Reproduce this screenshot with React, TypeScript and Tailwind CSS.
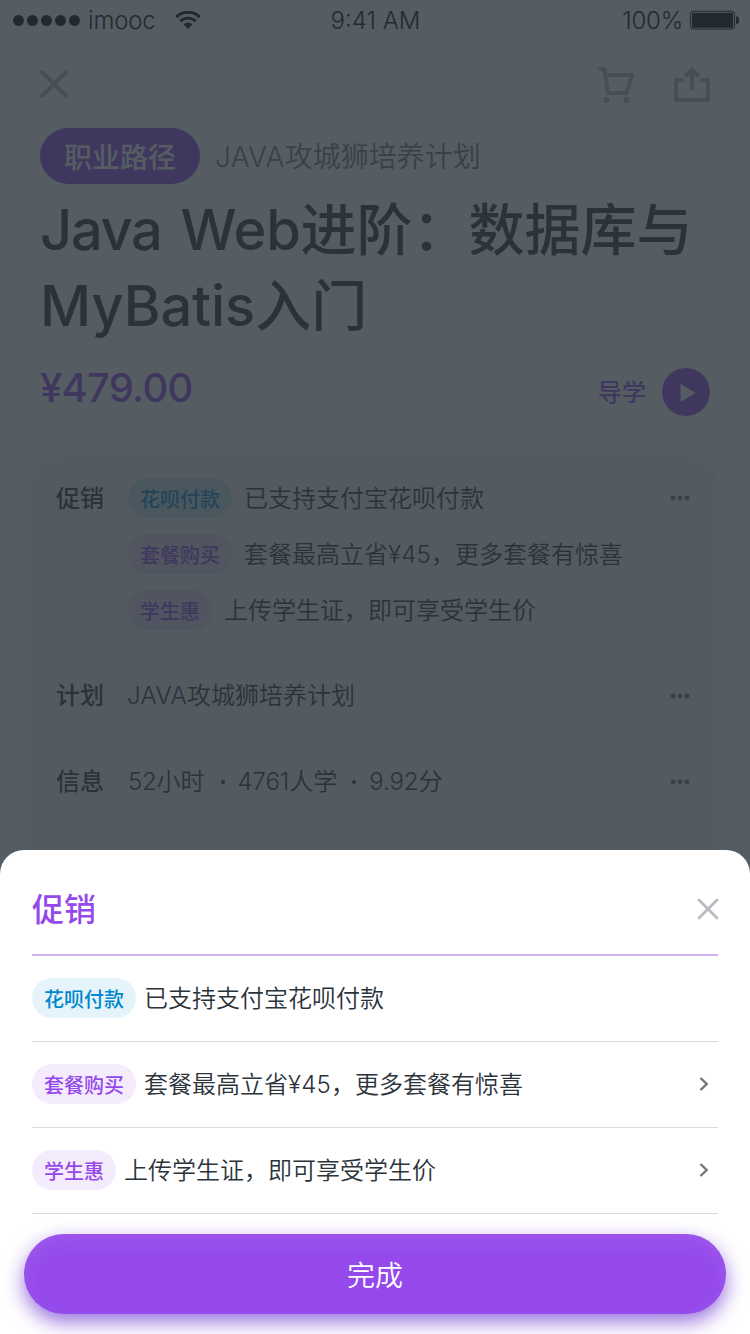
import type { ReactNode } from "react";

type Tone = "blue" | "purple";

interface Promo {
  tag: string;
  tone: Tone;
  before: string;
  price?: string;
  after?: string;
  link: boolean;
}

const promos: Promo[] = [
  { tag: "花呗付款", tone: "blue", before: "已支持支付宝花呗付款", link: false },
  { tag: "套餐购买", tone: "purple", before: "套餐最高立省", price: "¥45", after: "，更多套餐有惊喜", link: true },
  { tag: "学生惠", tone: "purple", before: "上传学生证，即可享受学生价", link: true },
];

const tones: Record<Tone, string> = {
  blue: "bg-[#0088cc]/10 text-[#0088cc]",
  purple: "bg-[#9549eb]/10 text-[#9549eb]",
};

const cardTones: Record<Tone, string> = {
  blue: "bg-[#0088cc]/16 text-[#0088cc]",
  purple: "bg-[#9549eb]/16 text-[#9549eb]",
};

function Tag({ className, children }: { className: string; children: ReactNode }) {
  return (
    <span className={`flex h-10 shrink-0 items-center rounded-full px-3 pt-[3px] text-[20px] leading-none font-medium ${className}`}>
      {children}
    </span>
  );
}

function PromoText({ promo }: { promo: Promo }) {
  return (
    <span className="pt-0.5 whitespace-nowrap">
      {promo.before}
      {promo.price && <span className="tracking-[0.2px]">{promo.price}</span>}
      {promo.after}
    </span>
  );
}

function Dots() {
  return (
    <svg width="20" height="6" viewBox="0 0 20 6" className="mr-1 ml-auto fill-[#71777d]">
      <circle cx="3" cy="3" r="2.4" />
      <circle cx="10" cy="3" r="2.4" />
      <circle cx="17" cy="3" r="2.4" />
    </svg>
  );
}

function StatusBar() {
  return (
    <div className="grid h-10 grid-cols-3 items-center pr-[11px] pl-3 text-[24px] leading-none font-light text-black">
      <div className="flex items-center">
        <svg width="70" height="12" viewBox="0 0 70 12">
          {[6.5, 20.5, 34.5, 48.5, 62.5].map((cx) => (
            <circle key={cx} cx={cx} cy="6.5" r="5.5" />
          ))}
        </svg>
        <span className="ml-1.5 pt-0.5 tracking-[-0.2px]">imooc</span>
        <svg width="26" height="18" viewBox="0 0 26 18" className="ml-5">
          <g fill="none" stroke="currentColor" strokeWidth="2.9">
            <path d="M1.2 6.1A17 17 0 0 1 24.8 6.1" />
            <path d="M5.2 10.2A11.3 11.3 0 0 1 20.8 10.2" />
          </g>
          <path d="M8.4 13.2A6.8 6.8 0 0 1 17.6 13.2L13 18Z" />
        </svg>
      </div>
      <div className="pt-0.5 text-center">9:41 AM</div>
      <div className="flex items-center justify-end">
        <span className="mr-[7px] pt-0.5 tracking-[-0.2px]">100%</span>
        <svg width="49" height="20" viewBox="0 0 49 20">
          <rect x="0.6" y="1.2" width="43.8" height="17.8" rx="2.5" fill="none" stroke="currentColor" />
          <rect x="2" y="2.7" width="41" height="15" rx="1" />
          <path d="M46 6.5h1.2a1.8 1.8 0 0 1 1.8 1.8v3.6a1.8 1.8 0 0 1-1.8 1.8H46z" />
        </svg>
      </div>
    </div>
  );
}

function Row({ label, children }: { label: string; children: ReactNode }) {
  return (
    <div className="flex h-[86px] items-center border-b border-[#d9dde1] pb-px">
      <span className="w-[72px] font-medium">{label}</span>
      {children}
      <Dots />
    </div>
  );
}

function CoursePage() {
  return (
    <div className="h-full overflow-hidden bg-white text-[#2b333b]">
      <StatusBar />
      <header className="flex h-[88px] items-center pr-10 pl-[39px]">
        <svg width="30" height="30" viewBox="0 0 30 30" className="stroke-[#b7bbbf]" fill="none" strokeWidth="4" strokeLinecap="round">
          <path d="M3 3 27 27M27 3 3 27" />
        </svg>
        <svg width="38" height="38" viewBox="0 0 38 38" className="ml-auto stroke-[#b7bbbf]" fill="none" strokeWidth="4" strokeLinecap="round" strokeLinejoin="round">
          <path d="M3 4H7.3L11 28H29.5L35 10H8.5" />
          <circle cx="9.5" cy="35" r="3" className="fill-[#b7bbbf]" stroke="none" />
          <circle cx="29.5" cy="35" r="3" className="fill-[#b7bbbf]" stroke="none" />
        </svg>
        <svg width="38" height="38" viewBox="0 0 38 38" className="ml-[37px] stroke-[#b7bbbf]" fill="none" strokeWidth="4">
          <path d="M12 15H4V35H36V15H28M20 25V6M13 11.5 20 4.5 27 11.5" />
        </svg>
      </header>

      <div className="flex items-center gap-[15px] px-10 text-[28px]">
        <span className="flex h-14 w-40 items-center justify-center rounded-full bg-[#9549eb] pt-[3px] font-medium text-white">职业路径</span>
        <span className="pt-0.5 font-[350] text-[#71777d]"><span className="tracking-[0.4px]">JAVA</span>攻城狮培养计划</span>
      </div>

      <h1 className="mt-2 px-10 text-[56px] leading-[76px] font-medium whitespace-nowrap">
        <span className="mr-1 tracking-[-1.3px]">Java</span> <span className="tracking-[-0.3px]">Web</span>进阶：数据库与
        <br />
        <span className="tracking-[-0.1px]">MyBatis</span>入门
      </h1>

      <div className="mt-3.5 flex h-[72px] items-start px-10 pt-0.5 font-medium text-[#9549eb]">
        <span className="text-[40px] leading-[56px] tracking-[-0.75px]">¥479.00</span>
        <div className="ml-auto flex h-14 items-center pt-2">
          <span className="mr-4 pt-px text-[24px]">导学</span>
          <svg width="48" height="48" viewBox="0 0 48 48">
            <circle cx="24" cy="24" r="24" className="fill-[#9549eb]" />
            <path d="M18.5 16 33.5 25 18.5 34Z" fill="white" />
          </svg>
        </div>
      </div>

      <section className="mx-8 mt-[26px] h-[480px] rounded-[28px] bg-[#f3f5f6] px-6 pt-3.5 text-[24px] font-[350]">
        <div className="flex h-[184px] border-b border-[#d9dde1]">
          <span className="flex h-14 w-[72px] items-center pt-px font-medium">促销</span>
          <div className="flex flex-1 flex-col">
            {promos.map((promo) => (
              <div key={promo.tag} className="flex h-14 items-center gap-3">
                <Tag className={cardTones[promo.tone]}>{promo.tag}</Tag>
                <PromoText promo={promo} />
                {promo.tone === "blue" && <Dots />}
              </div>
            ))}
          </div>
        </div>
        <Row label="计划">
          <span className="-ml-px"><span className="tracking-[0.4px]">JAVA</span>攻城狮培养计划</span>
        </Row>
        <Row label="信息">
          <span className="flex items-center">
            <span className="tracking-[-0.2px]">52</span>小时
            <i className="mr-[13px] ml-4 size-1 rounded-full bg-[#2b333b]" />
            <span className="tracking-[-0.1px]">4761</span>人学
            <i className="mr-[13px] ml-[15px] size-1 rounded-full bg-[#2b333b]" />
            <span className="tracking-[-0.1px]">9.92</span>分
          </span>
        </Row>
      </section>
    </div>
  );
}

function PromoSheet() {
  return (
    <div className="absolute inset-x-0 bottom-0 flex h-[484px] flex-col rounded-t-3xl bg-white">
      <div className="mx-8 flex h-[106px] items-center border-b-2 border-[#d2b3f8] pt-3.5">
        <h2 className="pt-0.5 text-[32px] font-medium text-[#9549eb]">促销</h2>
        <svg width="22" height="22" viewBox="0 0 22 22" className="mr-[-1px] ml-auto stroke-[#b7bbbf]" fill="none" strokeWidth="2.8" strokeLinecap="round">
          <path d="M2 2 20 20M20 2 2 20" />
        </svg>
      </div>
      {promos.map((promo) => (
        <div key={promo.tag} className="mx-8 flex h-[86px] items-center gap-2 border-b border-[#d9dadc] pb-px text-[24px] font-[350] text-[#2b333b]">
          <Tag className={tones[promo.tone]}>{promo.tag}</Tag>
          <PromoText promo={promo} />
          {promo.link && (
            <svg width="10" height="16" viewBox="0 0 10 16" className="mr-[9px] ml-auto stroke-[#71777d]" fill="none" strokeWidth="2.4">
              <path d="M1.5 2 7.7 8 1.5 14" />
            </svg>
          )}
        </div>
      ))}
      <button className="mx-6 mt-5 h-20 rounded-full bg-[#9549eb] pt-[3px] text-[28px] font-[350] text-white shadow-[0_8px_20px_rgba(98,38,205,0.65),inset_0_8px_20px_rgba(255,255,255,0.08)]">
        完成
      </button>
    </div>
  );
}

export default function App() {
  return (
    <main className="relative h-[1334px] w-[750px] overflow-hidden font-[Inter,'Noto_Sans_CJK_SC',sans-serif]">
      <CoursePage />
      <div className="absolute inset-0 bg-[#2b333b]/80" />
      <PromoSheet />
    </main>
  );
}
